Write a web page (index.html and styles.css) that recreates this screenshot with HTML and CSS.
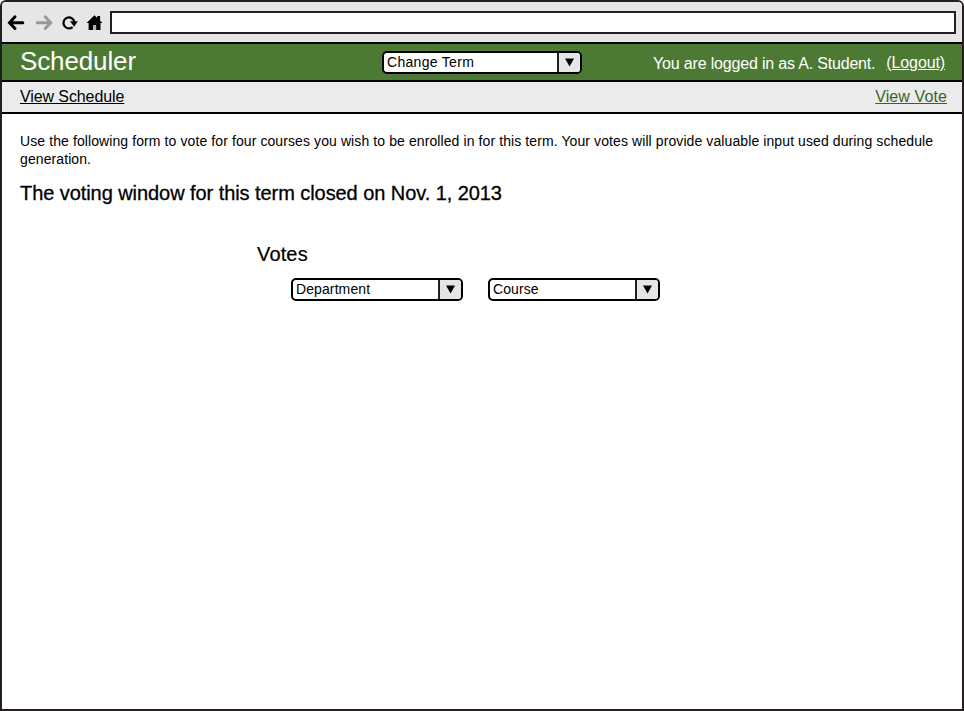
FILE: index.html
```html
<!DOCTYPE html>
<html lang="en">
<head>
<meta charset="utf-8">
<title>Scheduler</title>
<link rel="stylesheet" href="styles.css">
</head>
<body>
<div class="window">
  <div class="toolbar">
    <svg class="icons" width="108" height="40" viewBox="0 0 108 40">
      <g fill="none" stroke="#000" stroke-width="3" stroke-linecap="round">
        <path d="M20.8 20.7H8.5M13 14.8L7.5 20.7l5.5 5.8"/>
        <path stroke="#999" d="M35.2 20.7h12.5M43.2 14.8l5.5 5.9-5.5 5.8"/>
        <path stroke-width="2.2" stroke-linecap="butt" d="M70.6 25.1A5.5 5.5 0 1 1 72.4 20"/>
      </g>
      <path d="M68 19.2h7.8l-3.7 5.6z"/>
      <path d="M84.6 20.9l7.9-7.6 2.8 2.7v-2.1h2.8v4.8l2.4 2.2h-2v7.1H86.6v-7.1z"/>
      <path fill="#b5b5b5" d="M91 23h3.2v5H91z"/>
    </svg>
    <div class="address"></div>
  </div>
  <header class="header">
    <h1 class="brand">Scheduler</h1>
    <div class="select select-term"><span class="value">Change Term</span><span class="arrow"><svg width="9" height="9" viewBox="0 0 9 9"><path d="M0 .5h9L4.5 8.5z"/></svg></span></div>
    <div class="account"><span class="status">You are logged in as A. Student.</span><a class="logout">(Logout)</a></div>
  </header>
  <nav class="nav"><a class="schedule">View Schedule</a><a class="vote">View Vote</a></nav>
  <main class="content">
    <p class="intro">Use the following form to vote for four courses you wish to be enrolled in for this term. Your votes will provide valuable input used during schedule<br>generation.</p>
    <h2 class="notice">The voting window for this term closed on Nov. 1, 2013</h2>
    <section class="votes">
      <h2 class="title">Votes</h2>
      <div class="fields">
        <div class="select"><span class="value">Department</span><span class="arrow"><svg width="9" height="9" viewBox="0 0 9 9"><path d="M0 .5h9L4.5 8.5z"/></svg></span></div>
        <div class="select"><span class="value">Course</span><span class="arrow"><svg width="9" height="9" viewBox="0 0 9 9"><path d="M0 .5h9L4.5 8.5z"/></svg></span></div>
      </div>
    </section>
  </main>
</div>
</body>
</html>
```
FILE: styles.css
```css
* { box-sizing: border-box; }
body { margin: 0; background: #fff; font-family: "Liberation Sans", Arial, sans-serif; color: #000; }
h1, h2, p { margin: 0; font-weight: 400; }
.window { width: 964px; height: 711px; border: 2px solid #231f20; border-radius: 6px 6px 0 0; overflow: hidden; }
.toolbar { height: 42px; display: flex; align-items: flex-start; background: #e6e6e6; border-bottom: 2px solid #000; }
.icons { flex: none; }
.address { width: 846px; height: 23px; margin-top: 9px; background: #fff; border: 2px solid #231f20; }
.header { height: 38px; display: grid; grid-template-columns: 362px 200px 1fr; padding-left: 18px; background: #4c7a34; color: #fff; border-bottom: 2px solid #000; }
.brand { font-size: 26px; line-height: 34px; letter-spacing: -.12px; }
.select { width: 172px; height: 23px; display: flex; background: #fff; border: 2px solid #000; border-radius: 5px; overflow: hidden; color: #000; font-size: 14px; line-height: 18px; }
.select-term { width: 200px; margin-top: 7px; }
.value { flex: 1; padding-left: 3px; letter-spacing: .1px; }
.select-term .value { letter-spacing: .3px; }
.arrow { width: 23px; padding-right: 1px; display: flex; align-items: center; justify-content: center; background: #e6e6e6; border-left: 2px solid #231f20; }
.account { display: flex; justify-content: flex-end; padding-right: 17px; font-size: 16px; line-height: 36px; }
.status { margin-right: 11px; padding-top: 2px; letter-spacing: -.18px; }
.logout { padding-top: 1px; letter-spacing: -.12px; text-decoration: underline; }
.nav { height: 32px; display: flex; justify-content: space-between; padding: 0 15px 0 18px; background: #ebebeb; border-bottom: 2px solid #000; font-size: 16px; line-height: 29px; }
.nav a { text-decoration: underline; }
.schedule { letter-spacing: -.1px; }
.vote { color: #3b6428; letter-spacing: .1px; }
.content { padding: 18px 18px 0; }
.intro { font-size: 14px; line-height: 18px; letter-spacing: .096px; white-space: nowrap; }
.notice { margin-top: 13px; font-size: 20px; line-height: 24px; letter-spacing: -.065px; -webkit-text-stroke: .3px #000; }
.votes { margin: 37px 0 0 237px; }
.title { font-size: 20px; line-height: 24px; letter-spacing: .15px; -webkit-text-stroke: .2px #000; }
.fields { display: flex; gap: 25px; margin: 12px 0 0 34px; }
```
